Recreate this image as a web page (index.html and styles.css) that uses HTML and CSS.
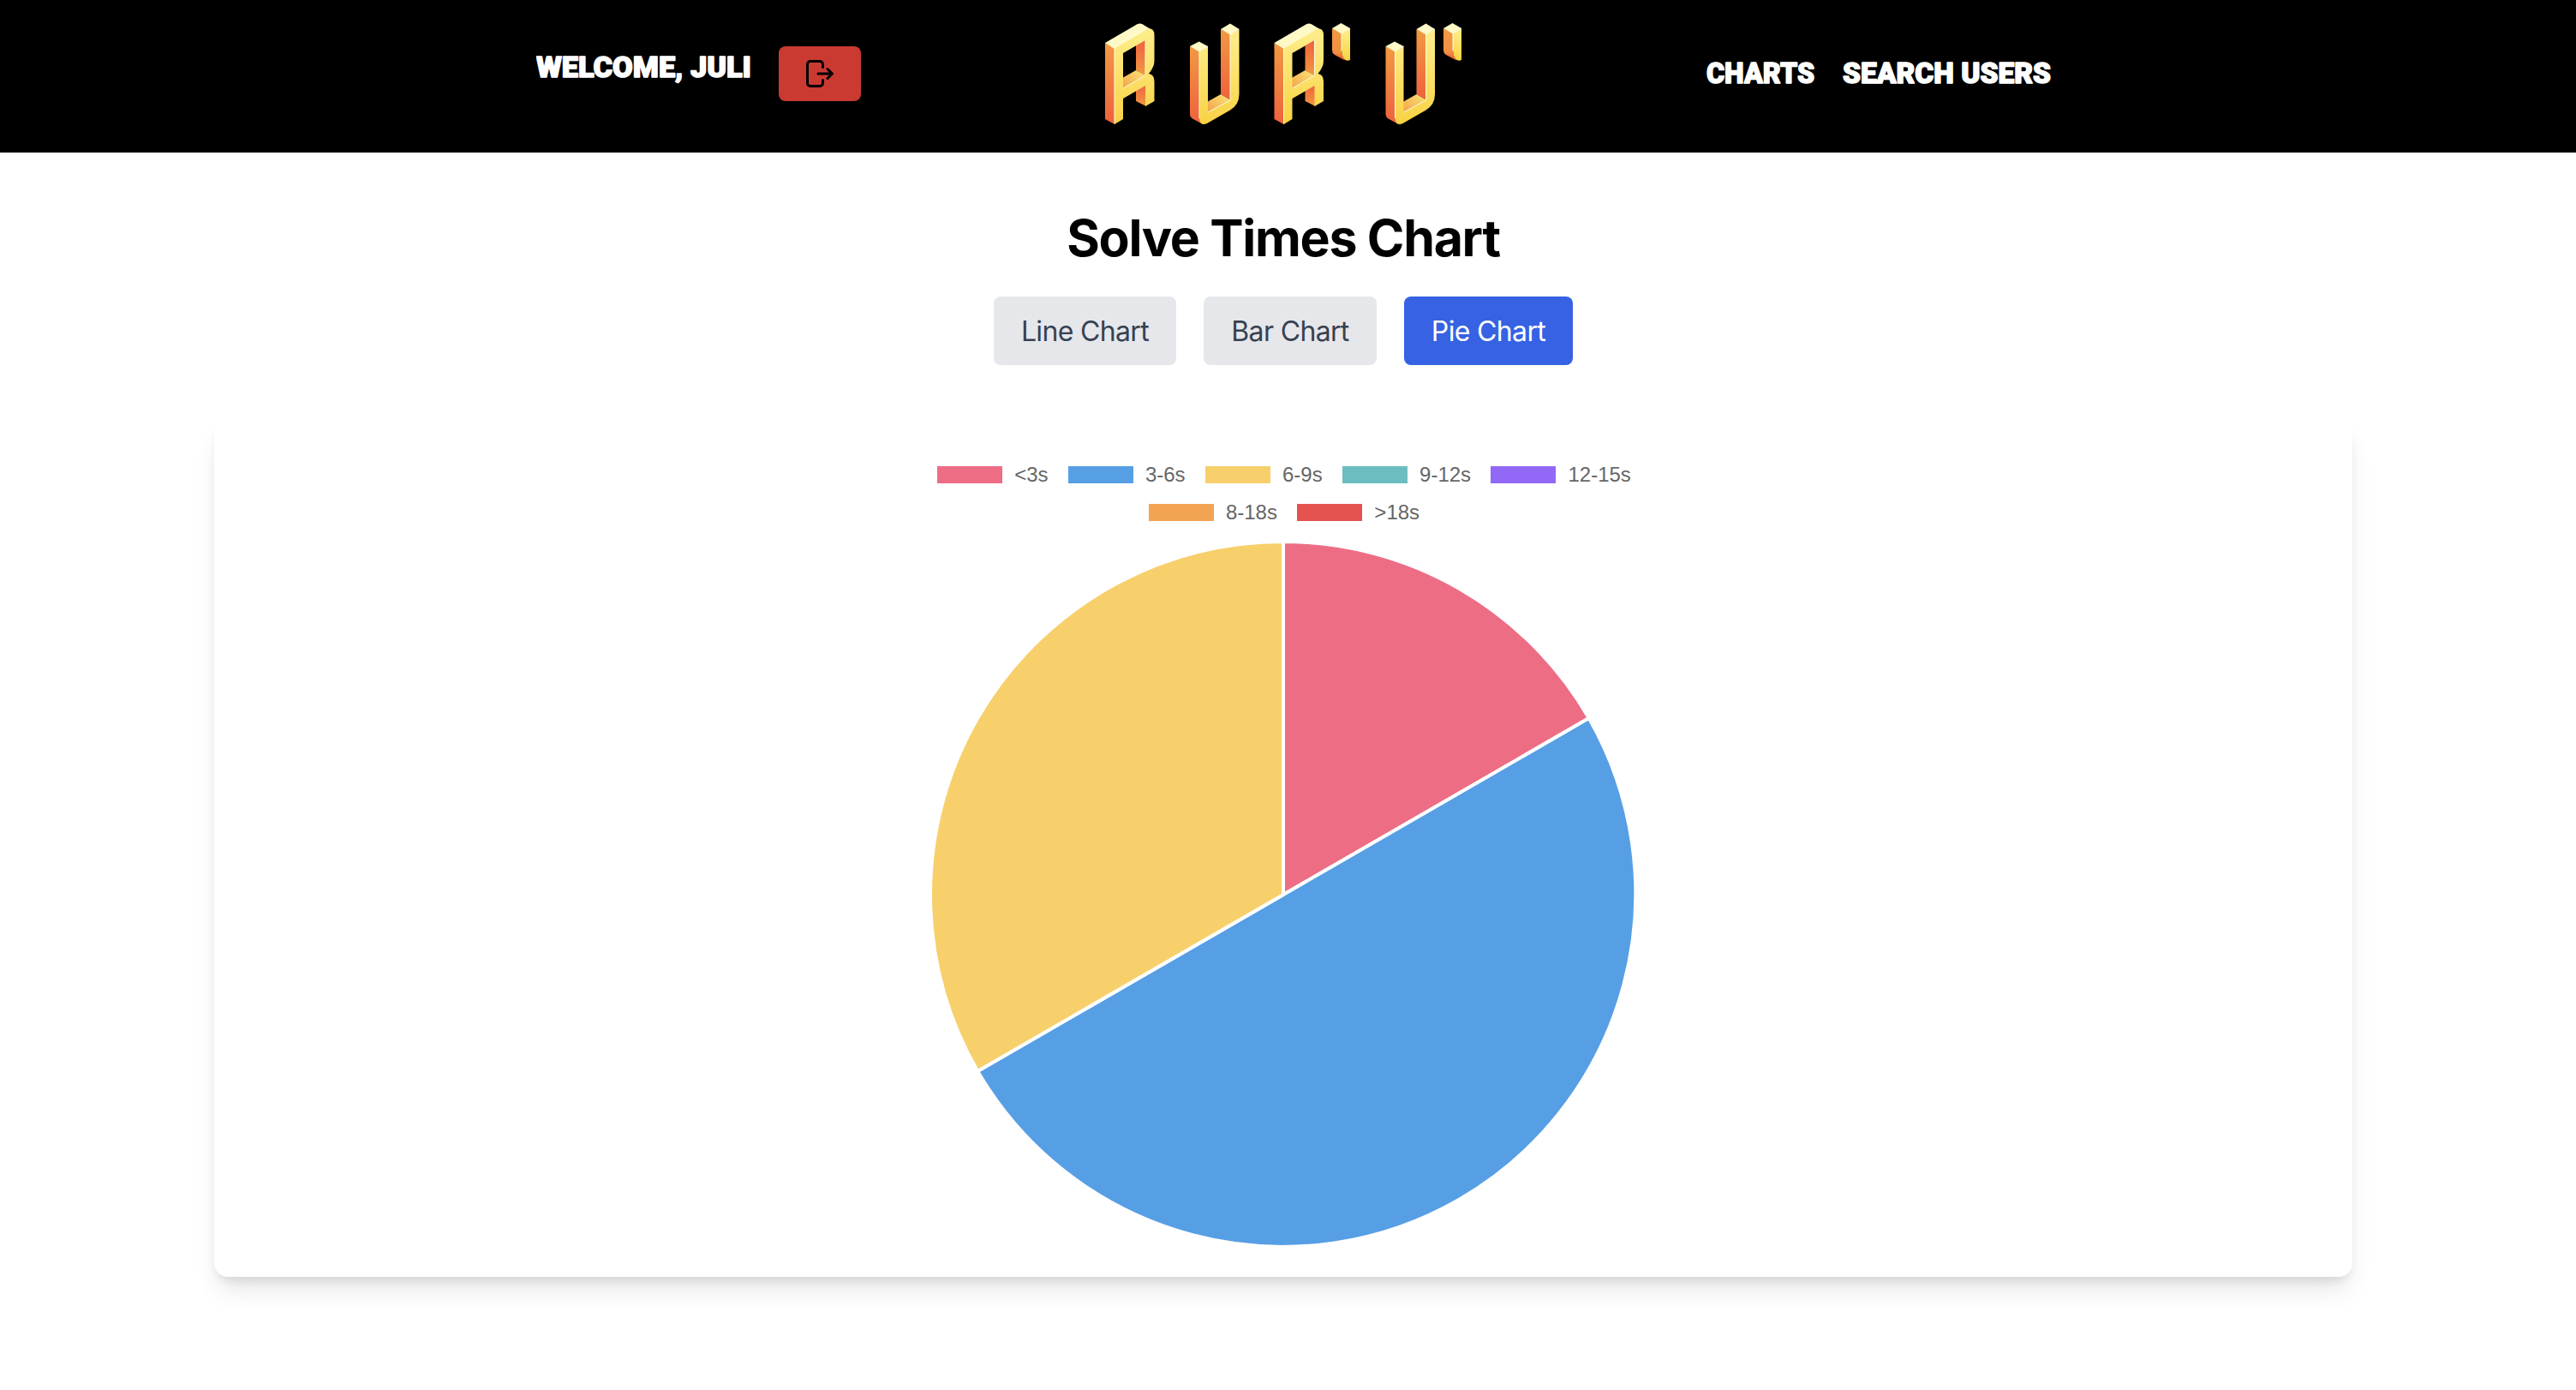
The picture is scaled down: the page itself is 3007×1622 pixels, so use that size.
FILE: index.html
```html
<!DOCTYPE html>
<html lang="en">
<head>
<meta charset="utf-8">
<title>Solve Times Chart</title>
<link rel="stylesheet" href="styles.css">
</head>
<body>
<header class="header">
  <div class="user">
    <svg class="word" width="256" height="48" viewBox="0 0 256 48"><text class="display" x="0" y="35" textLength="251" lengthAdjust="spacingAndGlyphs">WELCOME, JULI</text></svg>
    <button class="logout" aria-label="Log out">
      <svg width="32" height="32" viewBox="0 0 32 32" fill="none" stroke="#000" stroke-width="3" stroke-linecap="round" stroke-linejoin="round"><path d="M19.500 8.500V5a3.500 3.500 0 0 0-3.500-3.500H5A3.500 3.500 0 0 0 1.500 5v22A3.500 3.500 0 0 0 5 30.500h11a3.500 3.500 0 0 0 3.500-3.500v-3.500"/><path d="M14 16h16.500M25 10.500l5.500 5.500-5.500 5.500"/></svg>
    </button>
  </div>
  <svg class="logo" width="420" height="122" viewBox="0 0 420 122">
    <defs>
      <linearGradient id="front" x1="0" y1="0" x2="0" y2="1"><stop offset="0" stop-color="#fdee8b"/><stop offset=".35" stop-color="#fce574"/><stop offset="1" stop-color="#f8d244"/></linearGradient>
      <linearGradient id="side" x1="0" y1="0" x2="0" y2="1"><stop offset="0" stop-color="#f19a42"/><stop offset="1" stop-color="#ee613d"/></linearGradient>
      <linearGradient id="inner" x1="0" y1="1" x2="0" y2="0"><stop offset="0" stop-color="#f19a42"/><stop offset="1" stop-color="#ee613d"/></linearGradient>
      <linearGradient id="floor" x1="0" y1="1" x2="1" y2="0"><stop offset="0" stop-color="#f2a046"/><stop offset="1" stop-color="#fbe679"/></linearGradient>
      <linearGradient id="tick" x1="0" y1="0" x2="0" y2="1"><stop offset="0" stop-color="#f19a42"/><stop offset=".75" stop-color="#f09141"/><stop offset="1" stop-color="#ea4f3a"/></linearGradient>
      <g id="r">
        <path fill="url(#inner)" d="M36 26L48 20V63L36 56Z"/>
        <path fill="url(#inner)" d="M36 79L48 73V98L36 92Z"/>
        <path fill="url(#floor)" d="M20 65L36 56L47 62L20 78Z"/>
        <path fill="url(#side)" d="M0 24L12 29V119H11L0 113Z"/>
        <path fill="#fff9c8" d="M0 24L37 2.500Q40.500 .500 44 2.500L53 8L50 12L11 31Z"/>
        <path fill="url(#front)" fill-rule="evenodd" d="M11 30L46 9Q57.500 4 57.500 15V45Q57.500 52 51 60Q57.500 61 57.500 69V92L47 98V74L21 89V113L11 119ZM21 36V77L47 62V21Z"/>
        <path class="edge" d="M11 118V30L47 9M21 77L47 62V21"/>
      </g>
      <g id="u">
        <path fill="url(#side)" d="M36 8L48 14V91L36 84Z"/>
        <path fill="url(#floor)" d="M20 93L36 84L48 91L20 106Z"/>
        <path fill="url(#side)" d="M0 28L12 33V115L15 119L4 113Q0 111 0 107Z"/>
        <path fill="#fff9c8" d="M0 28L10.500 22.500L21 28L11 34.500ZM36 8L47 1.500L57.500 8L47 14.500Z"/>
        <path fill="url(#front)" d="M11 34L21 28V105L47 91V14L57.500 8V84Q57.500 96 47 102.500L20 118Q11 121.500 11 111Z"/>
        <path class="edge" d="M11 112V34L21 28M21 105L47 91V14L57 8"/>
      </g>
      <g id="prime">
        <path fill="url(#tick)" d="M0 7L11 12V36L15 44.500L3 38Q0 36 0 33Z"/>
        <path fill="#fff9c8" d="M0 7L10.500 1L21 7L11 13.500Z"/>
        <path fill="url(#front)" d="M11 13L21 7V44Q16 46 13.500 42Q11 38 11 33Z"/>
        <path class="edge" d="M11 33V13L21 7"/>
      </g>
    </defs>
    <use href="#r"/>
    <use href="#u" x="99"/>
    <use href="#r" x="197.500"/>
    <use href="#prime" x="265"/>
    <use href="#u" x="327.500"/>
    <use href="#prime" x="395"/>
  </svg>
  <nav class="nav">
    <svg width="134" height="48" viewBox="0 0 134 48"><text class="display" x="1" y="35" textLength="126" lengthAdjust="spacingAndGlyphs">CHARTS</text></svg>
    <svg width="254" height="48" viewBox="0 0 254 48"><text class="display" x="1" y="35" textLength="243" lengthAdjust="spacingAndGlyphs">SEARCH USERS</text></svg>
  </nav>
</header>
<main class="main">
  <h1 class="title">Solve Times Chart</h1>
  <div class="tabs">
    <button class="tab line">Line Chart</button>
    <button class="tab bar">Bar Chart</button>
    <button class="tab pie-tab active">Pie Chart</button>
  </div>
  <section class="card">
    <div class="legend">
      <div class="legend-row">
        <span class="item"><i class="swatch pink"></i>&lt;3s</span>
        <span class="item"><i class="swatch blue"></i>3-6s</span>
        <span class="item"><i class="swatch yellow"></i>6-9s</span>
        <span class="item"><i class="swatch teal"></i>9-12s</span>
        <span class="item"><i class="swatch purple"></i>12-15s</span>
      </div>
      <div class="legend-row">
        <span class="item"><i class="swatch orange"></i>8-18s</span>
        <span class="item"><i class="swatch red"></i>&gt;18s</span>
      </div>
    </div>
    <svg class="pie" width="824" height="824" viewBox="-412 -412 824 824">
      <g stroke="#fff" stroke-width="4" stroke-linejoin="bevel">
        <path fill="#ed6d85" d="M0 0V-412A412 412 0 0 1 356.800 -206Z"/>
        <path fill="#579fe5" d="M0 0L356.800 -206A412 412 0 0 1 -356.800 206Z"/>
        <path fill="#f7d06c" d="M0 0L-356.800 206A412 412 0 0 1 0 -412Z"/>
      </g>
    </svg>
  </section>
</main>
</body>
</html>
```
FILE: styles.css
```css
* { box-sizing: border-box; }
body { margin: 0; background: #fff; font-family: Inter, "Liberation Sans", sans-serif; }
button { border: 0; margin: 0; font: inherit; }
svg { display: block; flex: none; }

.header { height: 178px; background: #000; display: flex; align-items: flex-start; padding-left: 626px; }
.user { display: flex; width: 664px; padding-top: 54px; }
.word { margin-top: 1px; }
.display { font: 900 34px Roboto, sans-serif; fill: #fff; stroke: #fff; stroke-width: 1.5px; stroke-linejoin: round; }
.logout { display: flex; align-items: center; justify-content: center; width: 96px; height: 64px; margin-left: 27px; padding: 0; border-radius: 8px; background: #ca3a31; }
.logo { margin-top: 26px; }
.edge { fill: none; stroke: #fffbe0; stroke-width: 1; }
.nav { display: flex; gap: 25px; margin-left: 281px; padding-top: 62px; }

.main { min-height: 1444px; padding: 64px 261px 0 250px; display: flex; flex-direction: column; align-items: center; }
.title { margin: 0; font-size: 59px; line-height: 72px; font-weight: 700; letter-spacing: -1.3px; white-space: nowrap; }
.tabs { display: flex; gap: 32px; margin-top: 32px; }
.tab { height: 80px; padding: 2px 0 0; border-radius: 8px; background: #e5e7eb; color: #374151; font-size: 32px; line-height: 48px; letter-spacing: -.65px; white-space: nowrap; }
.line { width: 213px; }
.bar { width: 202px; }
.pie-tab { width: 197px; }
.active { background: #3662e3; color: #fff; }
.card { width: 2496px; height: 1000px; margin-top: 64px; padding-top: 52px; border-radius: 16px; background: #fff; box-shadow: 0 20px 30px -6px rgba(0,0,0,.1), 0 8px 12px -4px rgba(0,0,0,.1); display: flex; flex-direction: column; align-items: center; }
.legend { font: 24px/24px "Liberation Sans", Arial, sans-serif; color: #666; }
.legend-row { display: flex; justify-content: center; gap: 23.4px; margin-bottom: 20px; padding-left: 2px; }
.item { display: flex; align-items: center; white-space: nowrap; }
.swatch { width: 76px; height: 20px; margin-right: 14px; }
.pink { background: #ed6d85; }
.blue { background: #579fe5; }
.yellow { background: #f7d06c; }
.teal { background: #6cbdbf; }
.purple { background: #9268f6; }
.orange { background: #f2a354; }
.red { background: #e45350; }
.pie { margin-top: 2px; }
```
